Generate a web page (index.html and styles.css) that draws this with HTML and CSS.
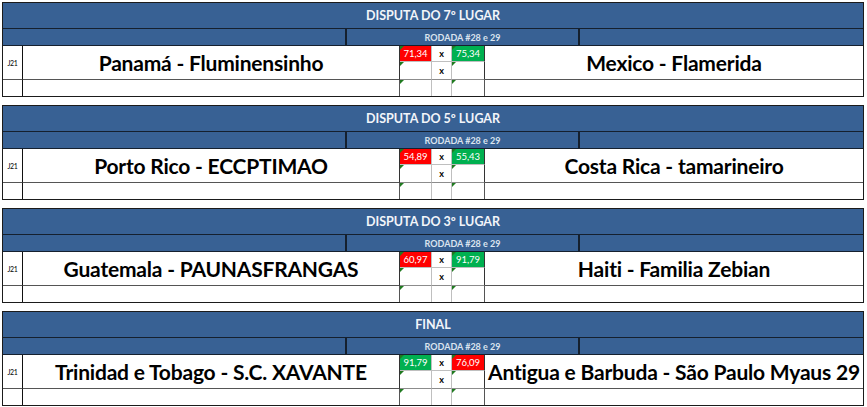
FILE: index.html
```html
<!DOCTYPE html>
<html lang="pt">
<head>
<meta charset="utf-8">
<title>Disputas</title>
<link rel="stylesheet" href="styles.css">
</head>
<body>
<div class="page">

  <section class="block">
    <div class="head">DISPUTA DO 7º LUGAR</div>
    <div class="sub"><div class="s1"></div><div class="s2">RODADA #28 e 29</div><div class="s3"></div></div>
    <div class="grid">
      <div class="j">J21</div>
      <div class="team t1">Panamá - Fluminensinho</div>
      <div class="sc a1 red tri">71,34</div>
      <div class="x x1">x</div>
      <div class="sc b1 green tri">75,34</div>
      <div class="team t2">Mexico - Flamerida</div>
      <div class="sc a2 tri"></div>
      <div class="x x2">x</div>
      <div class="sc b2 tri"></div>
      <div class="f f1"></div><div class="f f2"></div><div class="f f3 tri"></div><div class="f f4"></div><div class="f f5 tri"></div><div class="f f6"></div>
    </div>
  </section>

  <section class="block">
    <div class="head">DISPUTA DO 5º LUGAR</div>
    <div class="sub"><div class="s1"></div><div class="s2">RODADA #28 e 29</div><div class="s3"></div></div>
    <div class="grid">
      <div class="j">J21</div>
      <div class="team t1">Porto Rico - ECCPTIMAO</div>
      <div class="sc a1 red tri">54,89</div>
      <div class="x x1">x</div>
      <div class="sc b1 green tri">55,43</div>
      <div class="team t2">Costa Rica - tamarineiro</div>
      <div class="sc a2 tri"></div>
      <div class="x x2">x</div>
      <div class="sc b2 tri"></div>
      <div class="f f1"></div><div class="f f2"></div><div class="f f3 tri"></div><div class="f f4"></div><div class="f f5 tri"></div><div class="f f6"></div>
    </div>
  </section>

  <section class="block">
    <div class="head">DISPUTA DO 3º LUGAR</div>
    <div class="sub"><div class="s1"></div><div class="s2">RODADA #28 e 29</div><div class="s3"></div></div>
    <div class="grid">
      <div class="j">J21</div>
      <div class="team t1">Guatemala - PAUNASFRANGAS</div>
      <div class="sc a1 red tri">60,97</div>
      <div class="x x1">x</div>
      <div class="sc b1 green tri">91,79</div>
      <div class="team t2">Haiti - Familia Zebian</div>
      <div class="sc a2 tri"></div>
      <div class="x x2">x</div>
      <div class="sc b2 tri"></div>
      <div class="f f1"></div><div class="f f2"></div><div class="f f3 tri"></div><div class="f f4"></div><div class="f f5 tri"></div><div class="f f6"></div>
    </div>
  </section>

  <section class="block">
    <div class="head">FINAL</div>
    <div class="sub"><div class="s1"></div><div class="s2">RODADA #28 e 29</div><div class="s3"></div></div>
    <div class="grid">
      <div class="j">J21</div>
      <div class="team t1">Trinidad e Tobago - S.C. XAVANTE</div>
      <div class="sc a1 green tri">91,79</div>
      <div class="x x1">x</div>
      <div class="sc b1 red tri">76,09</div>
      <div class="team t2">Antigua e Barbuda - São Paulo Myaus 29</div>
      <div class="sc a2 tri"></div>
      <div class="x x2">x</div>
      <div class="sc b2 tri"></div>
      <div class="f f1"></div><div class="f f2"></div><div class="f f3 tri"></div><div class="f f4"></div><div class="f f5 tri"></div><div class="f f6"></div>
    </div>
  </section>

</div>
</body>
</html>
```

FILE: styles.css
```css
* { box-sizing: border-box; }
html, body { margin: 0; padding: 0; background: #ffffff; }
body { font-family: "Lato", "Open Sans", sans-serif; color: #000; }

.page {
  padding: 2px 0 0 2px;
  display: flex;
  flex-direction: column;
  gap: 8px;
  width: 864px;
}

.block {
  border: 1px solid #1b1b1b;
  width: 862px;
}

.head {
  height: 26px;
  background: #386194;
  border-bottom: 1px solid #15202e;
  color: #f2f5fa;
  font-weight: 700;
  font-size: 12.5px;
  display: flex;
  align-items: center;
  justify-content: center;
}

.sub {
  height: 17px;
  display: flex;
  background: #386194;
  border-bottom: 1px solid #15202e;
}
.sub > div { height: 16px; }
.s1 { width: 344px; border-right: 2px solid #15202e; }
.s2 {
  width: 233px;
  border-right: 2px solid #15202e;
  color: #dbe4ef;
  font-size: 9px;
  font-weight: 700;
  display: flex;
  align-items: center;
  justify-content: center;
}
.s3 { flex: 1; }

.grid {
  display: grid;
  grid-template-columns: 20px 377px 32px 20px 33px 378px;
  grid-template-rows: 16px 18px 16px;
}

.grid > div {
  position: relative;
  border-right: 1px solid #bfbfbf;
  border-bottom: 1px solid #bfbfbf;
}

.j {
  grid-column: 1;
  grid-row: 1 / span 2;
  border-right-color: #111 !important;
  border-bottom-color: #555 !important;
  font-size: 7px;
  display: flex;
  align-items: center;
  justify-content: center;
  letter-spacing: -0.3px;
}

.team {
  grid-row: 1 / span 2;
  font-weight: 700;
  font-size: 21px;
  display: flex;
  align-items: center;
  justify-content: center;
  white-space: nowrap;
  border-bottom-color: #555 !important;
  letter-spacing: -0.2px;
}
.t1 { grid-column: 2; border-right-color: #333 !important; }
.t2 { grid-column: 6; border-right: none !important; }

.sc {
  font-size: 9.5px;
  color: #fff;
  display: flex;
  align-items: center;
  justify-content: center;
}
.red { background: #ff0000; }
.green { background: #00b050; }

.x {
  font-size: 9px;
  font-weight: 700;
  display: flex;
  align-items: center;
  justify-content: center;
}

.a1 { grid-column: 3; grid-row: 1; }
.x1 { grid-column: 4; grid-row: 1; }
.b1 { grid-column: 5; grid-row: 1; border-right-color: #333 !important; }
.a2 { grid-column: 3; grid-row: 2; border-bottom-color: #8c8c8c !important; }
.x2 { grid-column: 4; grid-row: 2; border-bottom-color: #8c8c8c !important; }
.b2 { grid-column: 5; grid-row: 2; border-bottom-color: #8c8c8c !important; border-right-color: #333 !important; }

.f { grid-row: 3; border-bottom: none !important; }
.f1 { grid-column: 1; border-right-color: #111 !important; }
.f2 { grid-column: 2; border-right-color: #555 !important; }
.f3 { grid-column: 3; }
.f4 { grid-column: 4; }
.f5 { grid-column: 5; border-right-color: #555 !important; }
.f6 { grid-column: 6; border-right: none !important; }

.tri::before {
  content: "";
  position: absolute;
  left: 0;
  top: 0;
  width: 0;
  height: 0;
  border-top: 4px solid #1f7a1f;
  border-right: 4px solid transparent;
}
```
